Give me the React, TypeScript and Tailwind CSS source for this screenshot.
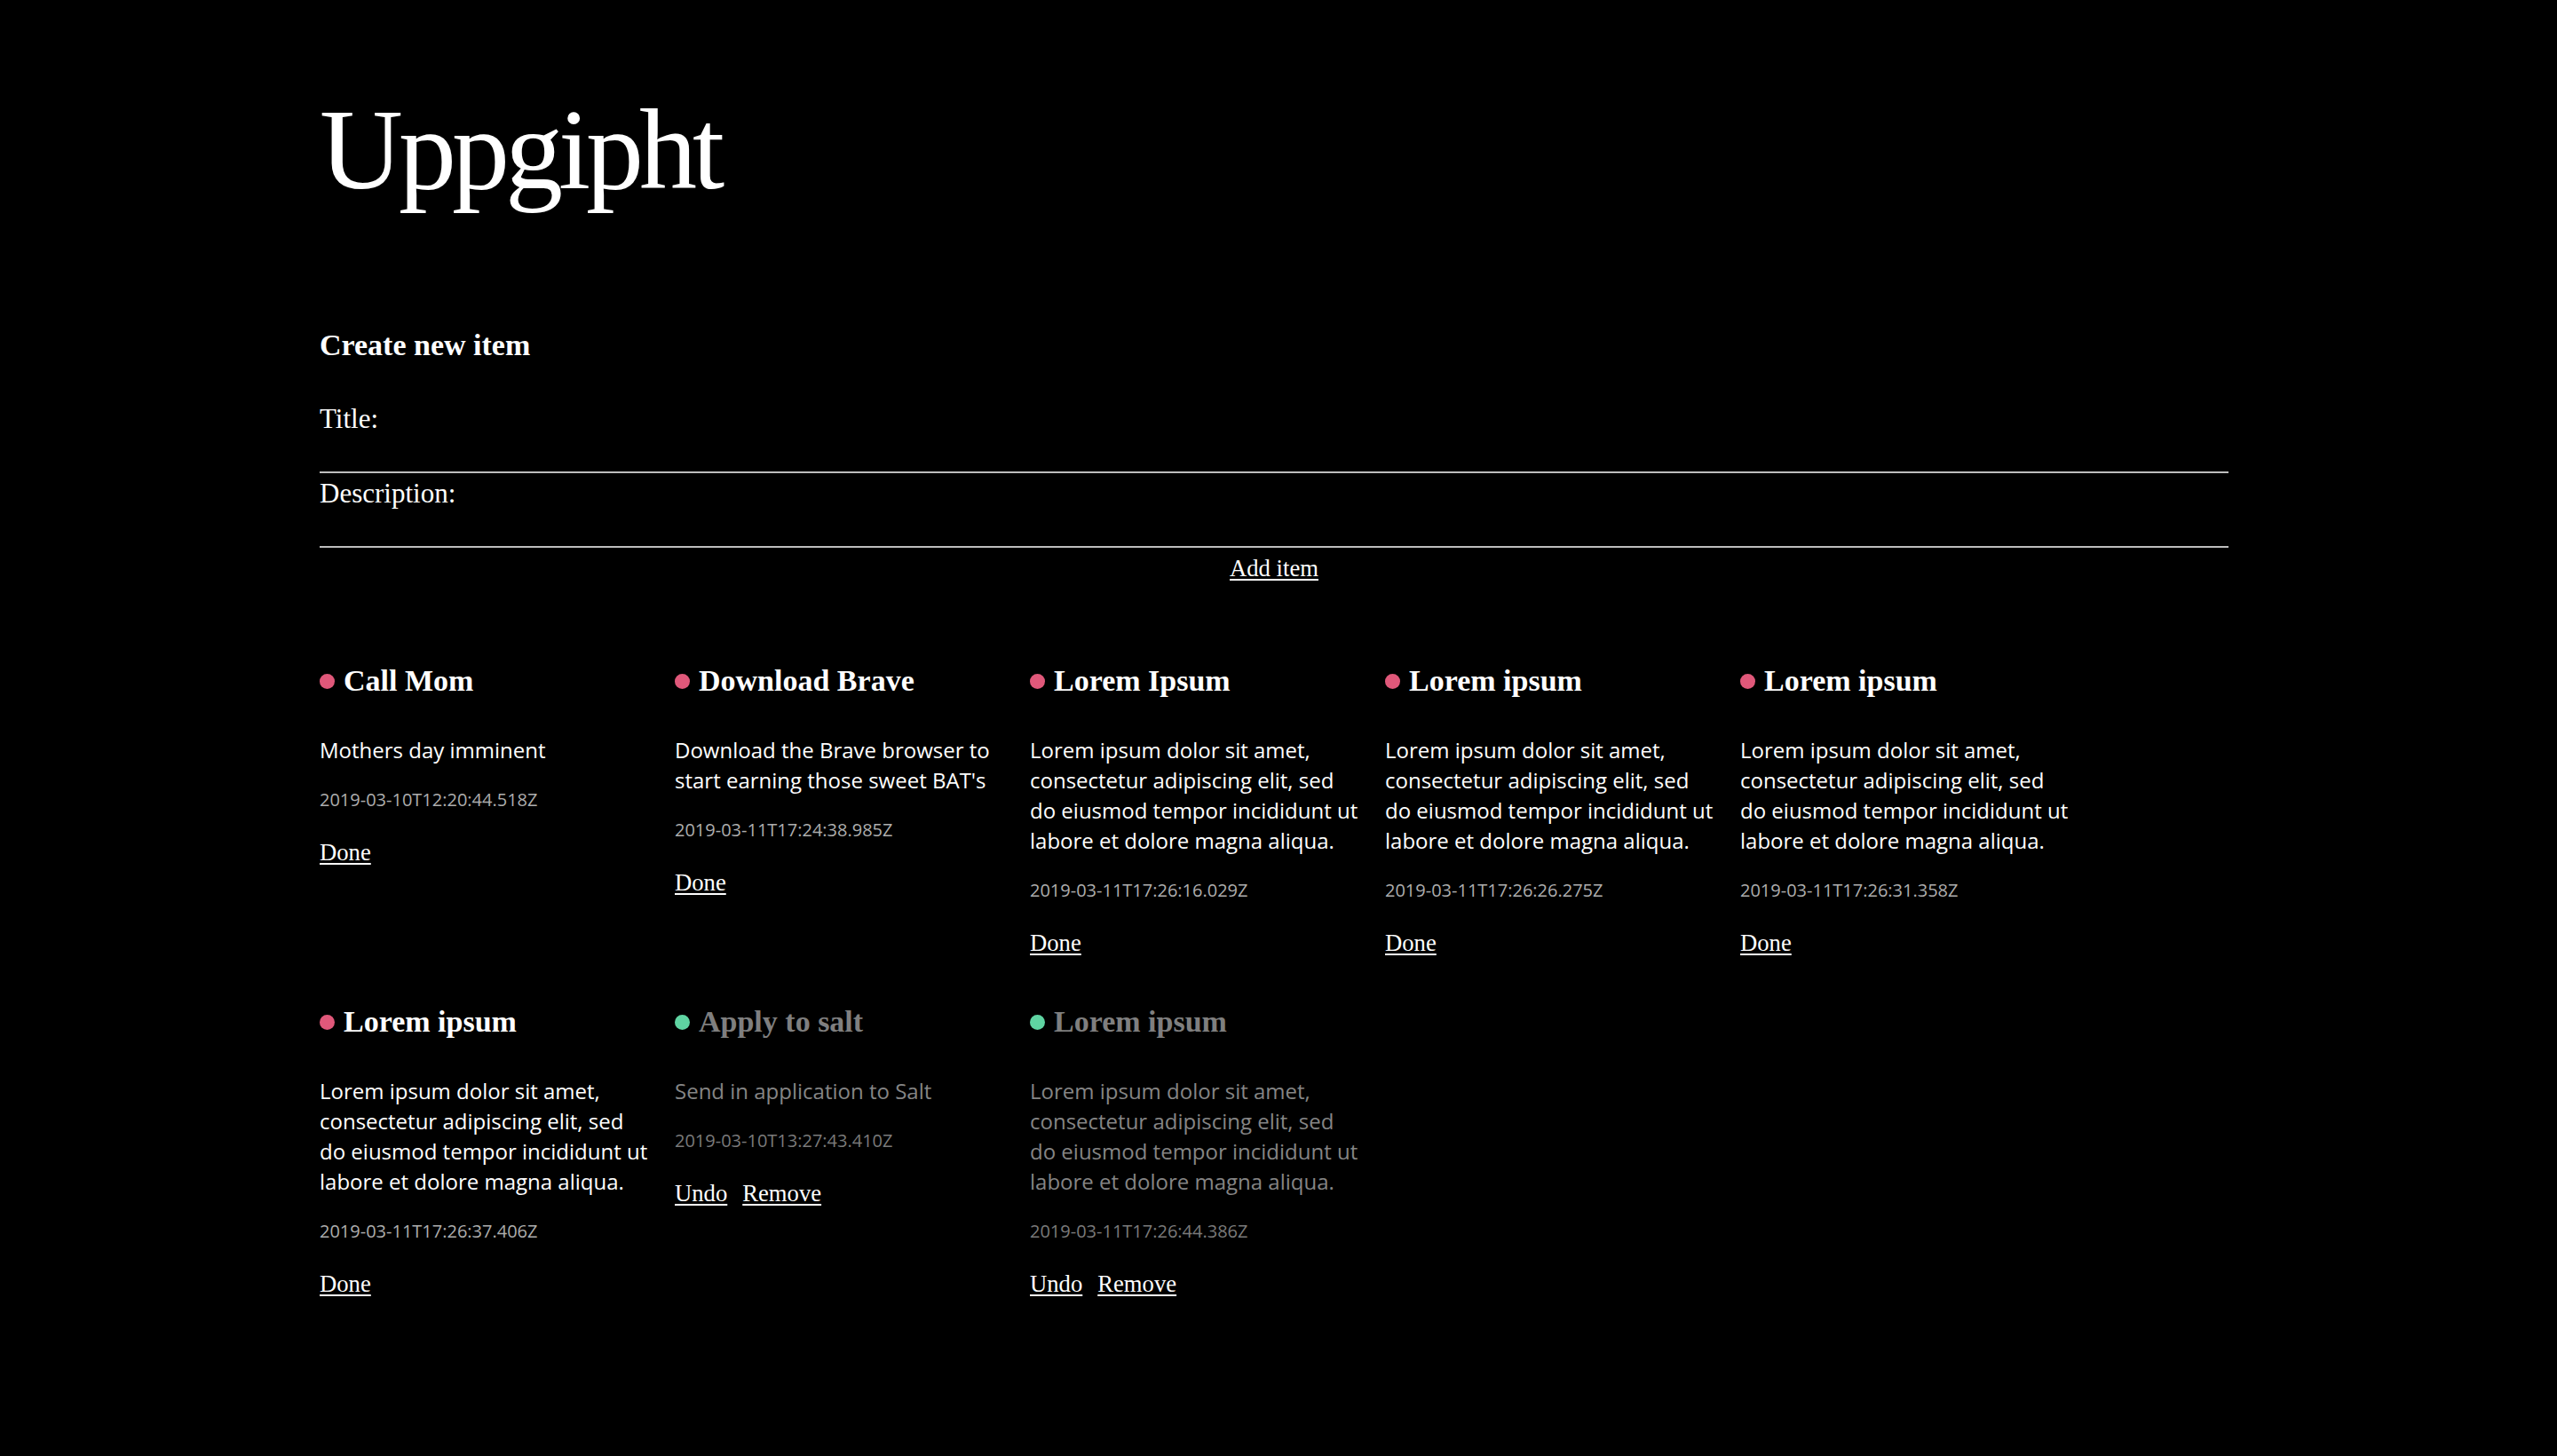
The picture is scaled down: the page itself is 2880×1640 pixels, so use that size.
import React from "react";

type Item = {
  title: string;
  description: string;
  created: string;
  done: boolean;
};

const lorem =
  "Lorem ipsum dolor sit amet, consectetur adipiscing elit, sed do eiusmod tempor incididunt ut labore et dolore magna aliqua.";

const items: Item[] = [
  { title: "Call Mom", description: "Mothers day imminent", created: "2019-03-10T12:20:44.518Z", done: false },
  {
    title: "Download Brave",
    description: "Download the Brave browser to start earning those sweet BAT's",
    created: "2019-03-11T17:24:38.985Z",
    done: false,
  },
  { title: "Lorem Ipsum", description: lorem, created: "2019-03-11T17:26:16.029Z", done: false },
  { title: "Lorem ipsum", description: lorem, created: "2019-03-11T17:26:26.275Z", done: false },
  { title: "Lorem ipsum", description: lorem, created: "2019-03-11T17:26:31.358Z", done: false },
  { title: "Lorem ipsum", description: lorem, created: "2019-03-11T17:26:37.406Z", done: false },
  { title: "Apply to salt", description: "Send in application to Salt", created: "2019-03-10T13:27:43.410Z", done: true },
  { title: "Lorem ipsum", description: lorem, created: "2019-03-11T17:26:44.386Z", done: true },
];

function LinkButton({ children }: { children: React.ReactNode }) {
  return (
    <button className="font-['Liberation_Serif',serif] text-[26.67px] leading-[32px] text-white underline decoration-2 underline-offset-[3px] cursor-pointer">
      {children}
    </button>
  );
}

function Card({ item }: { item: Item }) {
  return (
    <div className="w-[374px] mr-[26px] mb-[53px]">
      {/* Title with status dot */}
      <div className="flex items-center gap-[10px]">
        <span
          className={
            item.done
              ? "w-[17px] h-[17px] rounded-full bg-[#5fd4a2] shrink-0"
              : "w-[17px] h-[17px] rounded-full bg-[#e0587a] shrink-0"
          }
        />
        <h3
          className={
            item.done
              ? "font-['Liberation_Serif',serif] font-bold text-[34px] leading-[40px] text-[#7f7f7f]"
              : "font-['Liberation_Serif',serif] font-bold text-[34px] leading-[40px] text-white"
          }
        >
          {item.title}
        </h3>
      </div>
      <p
        className={
          item.done
            ? "mt-[41px] font-['Open_Sans',sans-serif] text-[24px] leading-[34px] text-[#858585]"
            : "mt-[41px] font-['Open_Sans',sans-serif] text-[24px] leading-[34px] text-white"
        }
      >
        {item.description}
      </p>
      <p
        className={
          item.done
            ? "mt-[25px] font-['Open_Sans',sans-serif] text-[20px] leading-[28px] text-[#7a7a7a]"
            : "mt-[25px] font-['Open_Sans',sans-serif] text-[20px] leading-[28px] text-[#adadad]"
        }
      >
        {item.created}
      </p>
      <div className="mt-[29px] flex gap-[17px]">
        {item.done ? (
          <>
            <LinkButton>Undo</LinkButton>
            <LinkButton>Remove</LinkButton>
          </>
        ) : (
          <LinkButton>Done</LinkButton>
        )}
      </div>
    </div>
  );
}

export default function App() {
  return (
    <div className="min-h-screen bg-black text-white font-['Liberation_Serif',serif]">
      <div className="ml-[360px] w-[2150px] pt-[103px]">
        <h1 className="text-[130px] leading-none tracking-[-5px]">Uppgipht</h1>

        <h2 className="mt-[134px] text-[34px] leading-[44px] font-bold">Create new item</h2>

        <form className="mt-[43px] flex flex-col gap-[5px]" onSubmit={(e) => e.preventDefault()}>
          <div className="flex flex-col">
            <label className="text-[31px] leading-[36px]">Title:</label>
            <input className="h-[43px] w-full bg-transparent border-b-2 border-[#bdbdbd] outline-none text-white text-[24px]" />
          </div>
          <div className="flex flex-col">
            <label className="text-[31px] leading-[36px]">Description:</label>
            <input className="h-[43px] w-full bg-transparent border-b-2 border-[#bdbdbd] outline-none text-white text-[24px]" />
          </div>
          <div className="mt-[2px] flex justify-center">
            <LinkButton>Add item</LinkButton>
          </div>
        </form>

        {/* Items */}
        <div className="mt-[91px] flex flex-wrap">
          {items.map((item, i) => (
            <Card key={i} item={item} />
          ))}
        </div>
      </div>
    </div>
  );
}
